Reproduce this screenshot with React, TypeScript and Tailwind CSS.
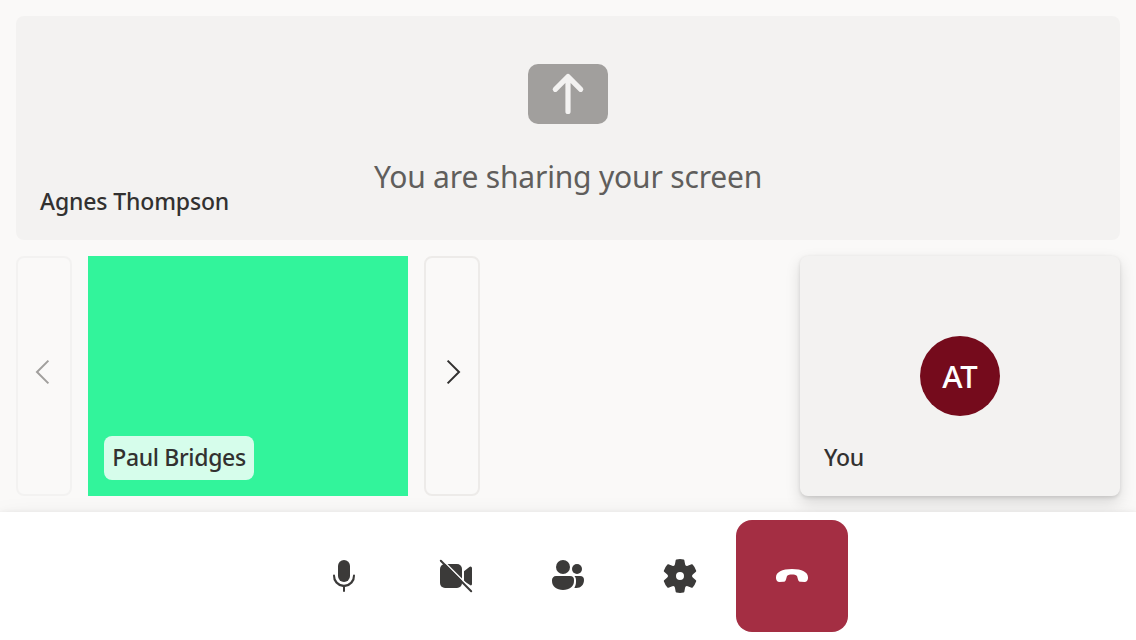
import type { ReactNode } from "react";

function Icon({ children }: { children: ReactNode }) {
  return (
    <svg viewBox="0 0 20 20" className="h-10 w-10" fill="currentColor">
      {children}
    </svg>
  );
}

function MicIcon() {
  return (
    <Icon>
      <path d="M10 13a3 3 0 0 0 3-3V5a3 3 0 0 0-6 0v5a3 3 0 0 0 3 3Z" />
      <path d="M5.5 9.7a.5.5 0 0 0-1 0 5.5 5.5 0 0 0 5 5.780v2.020a.5.5 0 0 0 1 0v-2.020a5.500 5.500 0 0 0 5-5.780.5.5 0 0 0-1 0 4.500 4.700 0 0 1-9 0Z" />
    </Icon>
  );
}

function VideoOffIcon() {
  return (
    <Icon>
      <rect x="2" y="4" width="11" height="12" rx="2.500" />
      <path d="m14 7.600 2.700-2.150A.8.8 0 0 1 18 6.100v7.900a.8.8 0 0 1-.6.780L14 12.600Z" />
      <path d="M3.100 1.900 18.100 16.900" stroke="white" strokeWidth="0.800" fill="none" />
      <path d="M2.400 2.400 17.600 17.600" stroke="currentColor" strokeWidth="1" strokeLinecap="round" fill="none" />
    </Icon>
  );
}

function PeopleIcon() {
  return (
    <Icon>
      <circle cx="7.5" cy="5.5" r="3.5" />
      <circle cx="14.5" cy="6.5" r="2.5" />
      <path d="M4 10h7a2 2 0 0 1 2 2v.5c0 2.700-2.300 4.500-5.500 4.500S2 15.200 2 12.500V12c0-1.100.9-2 2-2Z" />
      <path d="M13.250 10H16a2 2 0 0 1 2 2c0 2.400-1.600 4-3.800 4-.4 0-.7 0-1.050-.08.55-.9.850-1.900.850-3.080V12c0-.75-.27-1.450-.75-2Z" />
    </Icon>
  );
}

function SettingsIcon() {
  return (
    <Icon>
      <path d="M1.91 7.38A8.5 8.5 0 0 1 3.7 4.3a.5.5 0 0 1 .54-.13l1.92.68a1 1 0 0 0 1.32-.76l.36-2a.5.5 0 0 1 .4-.4 8.53 8.53 0 0 1 3.55 0c.2.04.35.2.38.4l.37 2a1 1 0 0 0 1.32.76l1.92-.68a.5.5 0 0 1 .54.13 8.5 8.5 0 0 1 1.78 3.08c.06.2 0 .4-.15.54l-1.56 1.32a1 1 0 0 0 0 1.52l1.56 1.32a.5.5 0 0 1 .15.54 8.5 8.5 0 0 1-1.78 3.08.5.5 0 0 1-.54.13l-1.92-.68a1 1 0 0 0-1.32.76l-.37 2a.5.5 0 0 1-.38.4 8.53 8.53 0 0 1-3.56 0 .5.5 0 0 1-.39-.4l-.36-2a1 1 0 0 0-1.32-.76l-1.92.68a.5.5 0 0 1-.54-.13 8.5 8.5 0 0 1-1.78-3.08.5.5 0 0 1 .15-.54l1.56-1.32a1 1 0 0 0 0-1.52L2.06 7.92a.5.5 0 0 1-.15-.54ZM8 10a2 2 0 1 0 4 0 2 2 0 0 0-4 0Z" />
    </Icon>
  );
}

function HangUpIcon() {
  return (
    <Icon>
      <path d="M10 6.500c5 0 8 1.600 8 4.100v.5c-.1 1.200-.7 1.900-1.700 1.900l-1.900-.1c-.8-.1-1.200-.5-1.400-1.200l-.5-1.700C11.900 9.300 11 9.200 10 9.200s-1.900.1-2.500.8L7 11.700c-.2.700-.6 1.100-1.400 1.200l-1.900.1c-1 0-1.600-.7-1.700-1.900v-.5C2 8.100 5 6.500 10 6.500Z" />
    </Icon>
  );
}

function ShareScreenIcon() {
  return (
    <svg viewBox="0 0 80 60" className="h-15 w-20">
      <rect width="80" height="60" rx="10" fill="#a19f9d" />
      <path d="M40 12.500V47.500M27.300 25.300 40 12.600l12.700 12.700" fill="none" stroke="#f3f2f1" strokeWidth="5.200" strokeLinecap="round" strokeLinejoin="round" />
    </svg>
  );
}

function PageButton({ direction }: { direction: "previous" | "next" }) {
  const previous = direction === "previous";
  return (
    <button
      aria-label={direction}
      disabled={previous}
      className={`flex w-14 items-center justify-center rounded-lg border-2 pb-2 ${previous ? "border-[#f3f2f1] text-[#a19f9d]" : "border-[#edebe9] text-[#323130]"}`}
    >
      <svg viewBox="0 0 28 28" className="h-7 w-7" fill="none" stroke="currentColor" strokeWidth="2">
        <path d={previous ? "M18.400 2.600 7 14l11.400 11.400" : "M9.600 2.600 21 14 9.600 25.400"} />
      </svg>
    </button>
  );
}

export default function App() {
  return (
    <div className="flex h-screen w-full flex-col overflow-hidden bg-[#faf9f8] font-['Noto_Sans','Open_Sans',sans-serif] text-[#323130]">
      <main className="flex flex-1 flex-col gap-4 p-4">
        <section className="grid h-56 rounded-lg bg-[#f3f2f1]">
          <div className="col-start-1 row-start-1 flex flex-col items-center pt-12">
            <ShareScreenIcon />
            <p className="mt-8 text-[30px] leading-[42px] tracking-[-0.18px] whitespace-nowrap text-[#605e5c]">You are sharing your screen</p>
          </div>
          <div className="col-start-1 row-start-1 self-end pb-[17px] pl-6 text-[23px] leading-11 font-[550] tracking-[-0.15px]">
            Agnes Thompson
          </div>
        </section>
        <section className="flex h-60 gap-4">
          <PageButton direction="previous" />
          <div className="flex w-80 items-end bg-[#32f49b] p-4">
            <div className="flex h-11 w-[150px] items-center justify-center rounded-lg bg-white/80 pb-0.5 text-[23px] font-[550] tracking-[-0.35px] whitespace-nowrap">
              Paul Bridges
            </div>
          </div>
          <PageButton direction="next" />
          <div className="ml-auto grid w-80 rounded-lg bg-[#f3f2f1] shadow-[0_6.4px_14.4px_rgba(0,0,0,0.13),0_1.2px_3.6px_rgba(0,0,0,0.11)]">
            <div className="col-start-1 row-start-1 flex h-20 w-20 items-center justify-center self-center justify-self-center rounded-full bg-[#750b1c] text-[31px] font-[550] text-white">
              AT
            </div>
            <div className="col-start-1 row-start-1 self-end pb-[17px] pl-6 text-[23px] leading-11 font-[550] tracking-[-0.3px]">You</div>
          </div>
        </section>
      </main>
      <footer className="flex h-32 items-center justify-center bg-white text-[#3b3a39] shadow-[0_12.8px_28.8px_rgba(0,0,0,0.13),0_2.4px_7.2px_rgba(0,0,0,0.11)]">
        <button aria-label="Microphone" className="flex h-28 w-28 items-center justify-center"><MicIcon /></button>
        <button aria-label="Camera" className="flex h-28 w-28 items-center justify-center"><VideoOffIcon /></button>
        <button aria-label="People" className="flex h-28 w-28 items-center justify-center"><PeopleIcon /></button>
        <button aria-label="Settings" className="flex h-28 w-28 items-center justify-center"><SettingsIcon /></button>
        <button aria-label="Leave" className="flex h-28 w-28 items-center justify-center rounded-2xl bg-[#a42e43] text-white"><HangUpIcon /></button>
      </footer>
    </div>
  );
}
